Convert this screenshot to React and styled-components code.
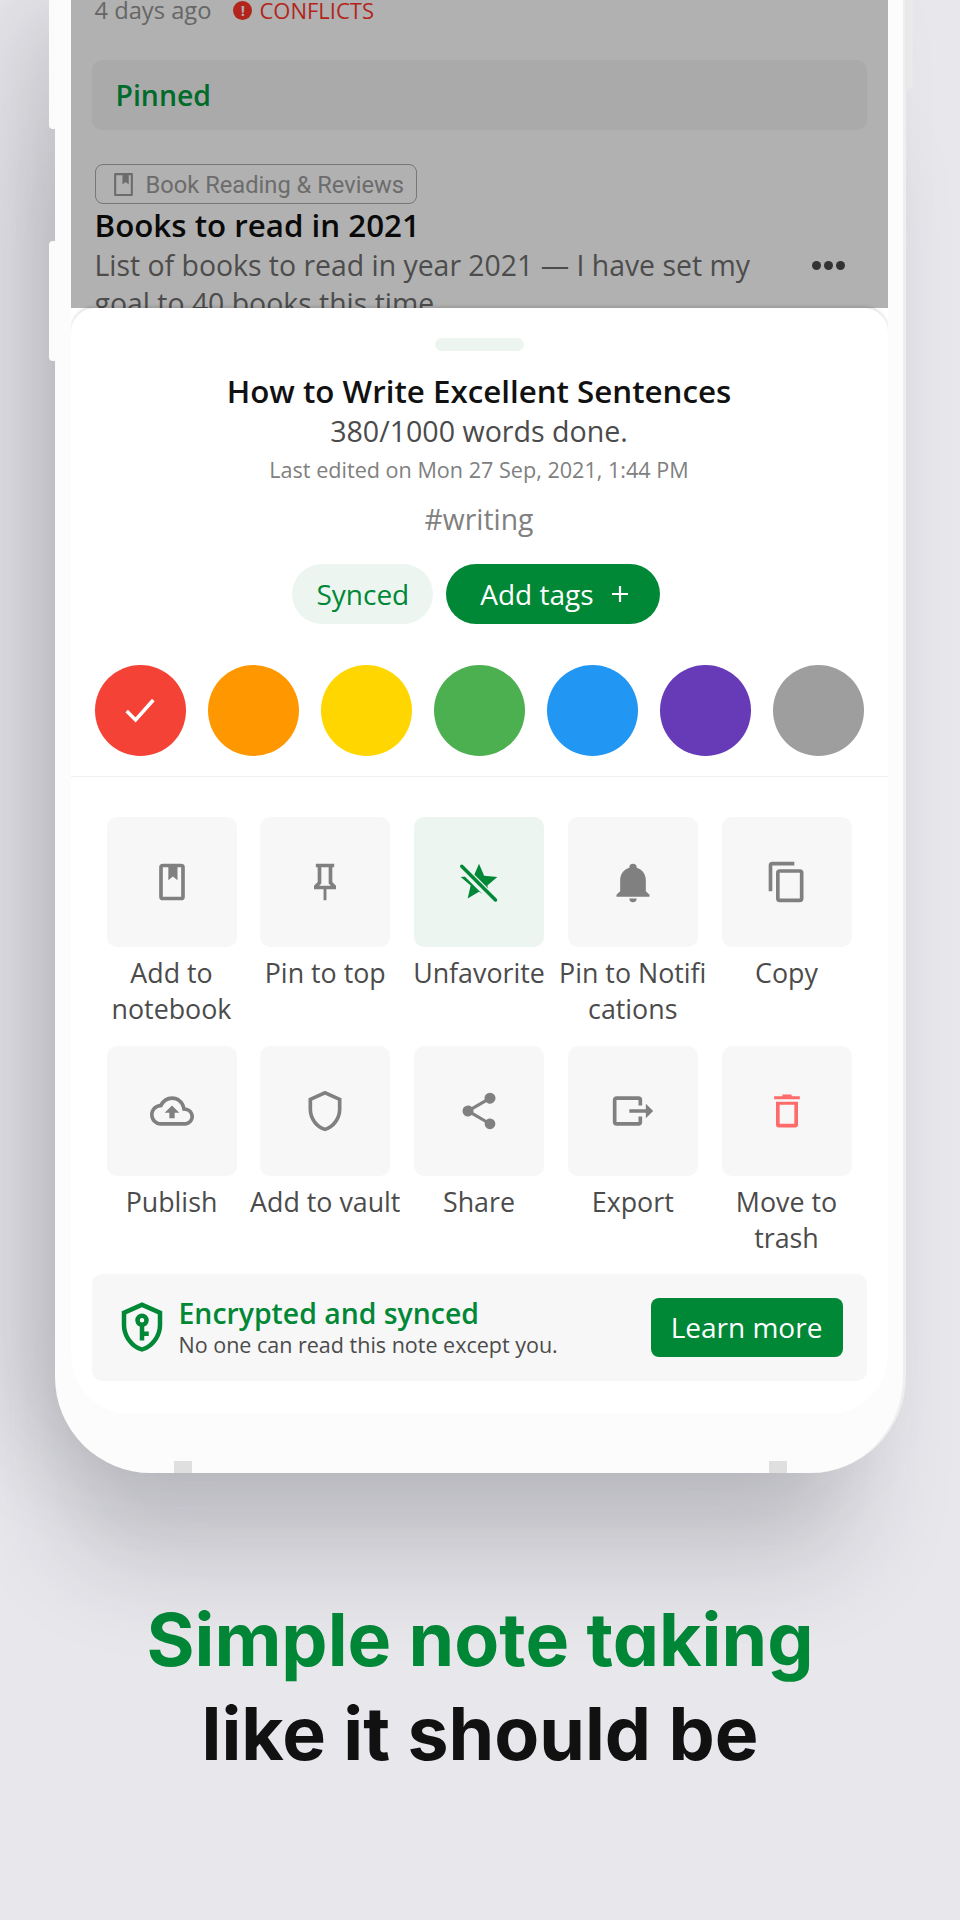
import React from 'react'
import styled, { createGlobalStyle } from 'styled-components'

const GlobalStyle = createGlobalStyle`
  html, body {
    margin: 0;
    padding: 0;
    background: #e7e7ec;
  }
  * {
    box-sizing: border-box;
  }
`

const colors = ['#f44336', '#ff9800', '#ffd600', '#4caf50', '#2196f3', '#673ab7', '#9e9e9e']

const icons = {
  notebook: (
    <>
      <path d="M7 2h10a2 2 0 0 1 2 2v16a2 2 0 0 1-2 2H7a2 2 0 0 1-2-2V4a2 2 0 0 1 2-2zm0 2v16h10V4h-2v7l-2.5-2-2.5 2V4H7z" />
    </>
  ),
  pin: <path d="M16,12V4H17V2H7V4H8V12L6,14V16H11.2V22H12.8V16H18V14L16,12M8.8,14L10,12.8V4H14V12.8L15.2,14H8.8Z" />,
  star: (
    <>
      <path d="M12,17.27L18.18,21L16.54,13.97L22,9.24L14.81,8.62L12,2L9.19,8.62L2,9.24L7.45,13.97L5.82,21L12,17.27Z" />
      <path d="M2 3.6L20 21.6" stroke="#edf5f0" strokeWidth="4.4" fill="none" />
      <path d="M2.6 3.4L21 21.8" stroke="currentColor" strokeWidth="1.9" fill="none" strokeLinecap="round" />
    </>
  ),
  bell: <path d="M21,19V20H3V19L5,17V11C5,7.9 7.03,5.17 10,4.29C10,4.19 10,4.1 10,4A2,2 0 0,1 12,2A2,2 0 0,1 14,4C14,4.1 14,4.19 14,4.29C16.97,5.17 19,7.9 19,11V17L21,19M14,21A2,2 0 0,1 12,23A2,2 0 0,1 10,21" />,
  copy: <path d="M19,21H8V7H19M19,5H8A2,2 0 0,0 6,7V21A2,2 0 0,0 8,23H19A2,2 0 0,0 21,21V7A2,2 0 0,0 19,5M16,1H4A2,2 0 0,0 2,3V17H4V3H16V1Z" />,
  cloud: <path d="M19.35 10.04C18.67 6.59 15.64 4 12 4 9.11 4 6.6 5.64 5.35 8.04 2.34 8.36 0 10.91 0 14c0 3.31 2.69 6 6 6h13c2.76 0 5-2.24 5-5 0-2.64-2.05-4.78-4.65-4.96zM19 18H6c-2.21 0-4-1.79-4-4 0-2.05 1.53-3.76 3.56-3.97l1.07-.11.5-.95C8.08 7.14 9.94 6 12 6c2.62 0 4.88 1.86 5.39 4.43l.3 1.5 1.53.11c1.56.1 2.78 1.41 2.78 2.96 0 1.65-1.35 3-3 3zM8 13h2.55v3h2.9v-3H16l-4-4z" />,
  shield: <path d="M21,11C21,16.55 17.16,21.74 12,23C6.84,21.74 3,16.55 3,11V5L12,1L21,5V11M12,21C15.75,20 19,15.54 19,11.22V6.3L12,3.18L5,6.3V11.22C5,15.54 8.25,20 12,21Z" />,
  share: <path d="M18,16.08C17.24,16.08 16.56,16.38 16.04,16.85L8.91,12.7C8.96,12.47 9,12.24 9,12C9,11.76 8.96,11.53 8.91,11.3L15.96,7.19C16.5,7.69 17.21,8 18,8A3,3 0 0,0 21,5A3,3 0 0,0 18,2A3,3 0 0,0 15,5C15,5.24 15.04,5.47 15.09,5.7L8.04,9.81C7.5,9.31 6.79,9 6,9A3,3 0 0,0 3,12A3,3 0 0,0 6,15C6.79,15 7.5,14.69 8.04,14.19L15.16,18.34C15.11,18.55 15.08,18.77 15.08,19C15.08,20.61 16.39,21.92 18,21.92C19.61,21.92 20.92,20.61 20.92,19A2.92,2.92 0 0,0 18,16.08Z" />,
  export: <path d="M23,12L19,8V11H10V13H19V16M1,18V6C1,4.89 1.9,4 3,4H15A2,2 0 0,1 17,6V9H15V6H3V18H15V15H17V18A2,2 0 0,1 15,20H3A2,2 0 0,1 1,18Z" />,
  trash: <path d="M9.5,3V4H5V5.6H19V4H14.5V3H9.5M6,7V19.5A1.5,1.5 0 0,0 7.5,21H16.5A1.5,1.5 0 0,0 18,19.5V7H6M8,8.6H16V19H8V8.6Z" />,
}

const actions = [
  { icon: 'notebook', label: 'Add to notebook' },
  { icon: 'pin', label: 'Pin to top' },
  { icon: 'star', label: 'Unfavorite', active: true },
  { icon: 'bell', label: <>Pin to Notifi<br />cations</> },
  { icon: 'copy', label: 'Copy' },
  { icon: 'cloud', label: 'Publish' },
  { icon: 'shield', label: 'Add to vault' },
  { icon: 'share', label: 'Share' },
  { icon: 'export', label: 'Export' },
  { icon: 'trash', label: 'Move to trash', danger: true },
]

const App = () => {
  return (
    <Page>
      <GlobalStyle />
      <Phone>
        <SideButton $top={-10} $height={139} />
        <SideButton $top={241} $height={120} />
        <RightButton />
        <Notch $left={119} />
        <Notch $left={714} />
        <Screen>
          <Backdrop>
            <MetaRow>
              <span>4 days ago</span>
              <Conflicts>
                <AlertDot>!</AlertDot>
                CONFLICTS
              </Conflicts>
            </MetaRow>
            <PinnedBar>Pinned</PinnedBar>
            <NotebookChip>
              <ChipIcon viewBox="0 0 20 24" fill="currentColor">
                <path d="M2 1h16a1 1 0 0 1 1 1v20a1 1 0 0 1-1 1H2a1 1 0 0 1-1-1V2a1 1 0 0 1 1-1zm1 2v18h14V3h-2v9l-3-2.4L9 12V3H3z" />
              </ChipIcon>
              Book Reading &amp; Reviews
            </NotebookChip>
            <NoteTitle>Books to read in 2021</NoteTitle>
            <NoteRow>
              <NoteBody>
                List of books to read in year 2021 — I have set my goal to 40 books this time.
              </NoteBody>
              <Dots>
                <i />
                <i />
                <i />
              </Dots>
            </NoteRow>
          </Backdrop>
          <Sheet>
            <Handle />
            <SheetTitle>How to Write Excellent Sentences</SheetTitle>
            <WordCount>380/1000 words done.</WordCount>
            <Edited>Last edited on Mon 27 Sep, 2021, 1:44 PM</Edited>
            <Hashtag>#writing</Hashtag>
            <PillRow>
              <SyncedPill>Synced</SyncedPill>
              <AddTagsPill>
                Add tags
                <PlusIcon viewBox="0 0 20 20" stroke="currentColor" strokeWidth="2.2">
                  <path d="M10 2v16M2 10h16" />
                </PlusIcon>
              </AddTagsPill>
            </PillRow>
            <ColorRow>
              {colors.map((color, i) => (
                <Swatch key={color} $color={color}>
                  {i === 0 && (
                    <svg width="40" height="40" viewBox="0 0 36 36" fill="none" stroke="#fff" strokeWidth="3.2">
                      <path d="M6 19l8 8L30 9" />
                    </svg>
                  )}
                </Swatch>
              ))}
            </ColorRow>
            <ActionGrid>
              {actions.map((action) => (
                <Action key={action.icon}>
                  <Tile $active={action.active} $danger={action.danger}>
                    <svg width="44" height="44" viewBox="0 0 24 24" fill="currentColor">
                      {icons[action.icon]}
                    </svg>
                  </Tile>
                  <ActionLabel>{action.label}</ActionLabel>
                </Action>
              ))}
            </ActionGrid>
            <Banner>
              <svg width="54" height="54" viewBox="0 0 24 24" fill="#008837">
                <path d="M12,1L3,5V11C3,16.55 6.84,21.74 12,23C17.16,21.74 21,16.55 21,11V5L12,1M12,3.18L19,6.3V11.22C19,15.54 15.75,20 12,21C8.25,20 5,15.54 5,11.22V6.3L12,3.18M12,6A3,3 0 0,0 9,9C9,10.31 9.83,11.42 11,11.83V18H13V16H15V14H13V11.83C14.17,11.42 15,10.31 15,9A3,3 0 0,0 12,6M12,8A1,1 0 0,1 13,9A1,1 0 0,1 12,10A1,1 0 0,1 11,9A1,1 0 0,1 12,8Z" />
              </svg>
              <BannerText>
                <BannerTitle>Encrypted and synced</BannerTitle>
                <BannerSub>No one can read this note except you.</BannerSub>
              </BannerText>
              <LearnMore>Learn more</LearnMore>
            </Banner>
          </Sheet>
        </Screen>
      </Phone>
      <Headline>
        <HeadlineLine $green>Simple note taking</HeadlineLine>
        <HeadlineLine>like it should be</HeadlineLine>
      </Headline>
    </Page>
  )
}

const Page = styled.div`
  width: 960px;
  height: 1920px;
  overflow: hidden;
  background: #e7e7ec;
  display: flex;
  flex-direction: column;
  align-items: center;
  font-family: 'Open Sans', sans-serif;
`

const Phone = styled.div`
  position: relative;
  flex: none;
  width: 851px;
  height: 1473px;
  padding: 0 15px 59px 16px;
  background: #fcfcfc;
  border-radius: 0 0 96px 96px;
  border-right: 3px solid #eeeeee;
  display: flex;
  box-shadow: -50px 0 90px -10px rgba(40, 40, 50, 0.17),
    -20px 120px 100px -30px rgba(40, 40, 50, 0.18);
`

const SideButton = styled.div`
  position: absolute;
  left: -6px;
  top: ${(p) => p.$top}px;
  width: 6px;
  height: ${(p) => p.$height}px;
  background: #fbfbfb;
  border-radius: 4px 0 0 4px;
`

const RightButton = styled.div`
  position: absolute;
  right: -10px;
  top: -10px;
  width: 8px;
  height: 99px;
  background: #e9e9ea;
  border-radius: 0 4px 4px 0;
`

const Notch = styled.div`
  position: absolute;
  left: ${(p) => p.$left}px;
  bottom: 0;
  width: 18px;
  height: 12px;
  background: #dfdfdf;
`

const Screen = styled.div`
  flex: 1;
  min-width: 0;
  display: flex;
  flex-direction: column;
  background: #fff;
  border-radius: 0 0 60px 60px;
  overflow: hidden;
`

const Backdrop = styled.div`
  flex: none;
  height: 308px;
  padding: 0 21px;
  overflow: hidden;
  background: #b1b1b1;
`

const MetaRow = styled.div`
  display: flex;
  align-items: center;
  gap: 22px;
  height: 30px;
  margin: -5px 0 0 3px;
  font-size: 23.7px;
  line-height: 30px;
  color: #666;
`

const Conflicts = styled.span`
  display: flex;
  align-items: center;
  gap: 7px;
  font-size: 22px;
  color: #b3251c;
`

const AlertDot = styled.span`
  width: 19px;
  height: 19px;
  border-radius: 50%;
  background: #b3251c;
  color: #b1b1b1;
  font-size: 15px;
  font-weight: 700;
  line-height: 19px;
  text-align: center;
`

const PinnedBar = styled.div`
  height: 70px;
  margin-top: 35px;
  padding-left: 24px;
  border-radius: 10px;
  background: #aaaaaa;
  color: #006b2a;
  font-size: 28.4px;
  font-weight: 600;
  line-height: 70px;
`

const NotebookChip = styled.div`
  display: inline-flex;
  align-items: center;
  gap: 12px;
  height: 40px;
  margin: 34px 0 0 3px;
  padding: 1px 12px 0 17px;
  border: 1.5px solid #777;
  border-radius: 8px;
  font-family: Roboto, sans-serif;
  font-size: 23.7px;
  color: #6c6c6c;
`

const ChipIcon = styled.svg`
  width: 21px;
  height: 25px;
`

const NoteTitle = styled.div`
  margin: 1px 0 0 3px;
  font-size: 31.3px;
  font-weight: 600;
  line-height: 41px;
  color: #0a0a0a;
`

const NoteRow = styled.div`
  display: flex;
  margin-left: 3px;
`

const NoteBody = styled.div`
  width: 694px;
  font-size: 28.4px;
  line-height: 38px;
  color: #4c4c4c;
`

const Dots = styled.div`
  display: flex;
  gap: 3px;
  height: 8px;
  margin: 15px 0 0 23px;
  i {
    width: 9px;
    height: 9px;
    border-radius: 50%;
    background: #333;
  }
`

const Sheet = styled.div`
  flex: 1;
  display: flex;
  flex-direction: column;
  align-items: center;
  padding: 30px 21px 0;
  border-radius: 24px 24px 0 0;
  background: #fff;
  box-shadow: 0 -2px 3px rgba(0, 0, 0, 0.12);
  position: relative;
`

const Handle = styled.div`
  width: 89px;
  height: 13px;
  border-radius: 7px;
  background: #edf5f0;
`

const SheetTitle = styled.div`
  margin-top: 19px;
  font-size: 31.3px;
  font-weight: 600;
  line-height: 42px;
  color: #111;
`

const WordCount = styled.div`
  font-size: 28.6px;
  line-height: 38px;
  color: #4b4b4b;
`

const Edited = styled.div`
  margin-top: 2px;
  font-size: 21.6px;
  line-height: 36px;
  color: #808080;
`

const Hashtag = styled.div`
  margin-top: 11.5px;
  font-size: 28.3px;
  line-height: 38px;
  color: #808080;
`

const PillRow = styled.div`
  display: flex;
  gap: 13px;
  margin: 26px 6px 0 0;
`

const SyncedPill = styled.div`
  display: flex;
  align-items: center;
  height: 60px;
  padding: 0 24px;
  border-radius: 30px;
  background: #edf5f0;
  color: #008837;
  font-size: 28px;
`

const AddTagsPill = styled(SyncedPill)`
  gap: 16px;
  padding: 0 30px 0 34px;
  background: #008837;
  color: #fff;
`

const PlusIcon = styled.svg`
  width: 20px;
  height: 20px;
`

const ColorRow = styled.div`
  align-self: stretch;
  display: flex;
  justify-content: space-between;
  margin: 41px -21px 0;
  padding: 0 24px 20px;
  border-bottom: 1px solid #f2f2f2;
`

const Swatch = styled.div`
  display: flex;
  align-items: center;
  justify-content: center;
  width: 91px;
  height: 91px;
  border-radius: 50%;
  background: ${(p) => p.$color};
`

const ActionGrid = styled.div`
  align-self: stretch;
  display: grid;
  grid-template-columns: repeat(5, 130px);
  grid-auto-rows: 229px;
  justify-content: space-between;
  margin-top: 40px;
  padding: 0 15px;
`

const Action = styled.div`
  display: flex;
  flex-direction: column;
  align-items: center;
`

const Tile = styled.div`
  display: flex;
  align-items: center;
  justify-content: center;
  width: 130px;
  height: 130px;
  flex: none;
  border-radius: 10px;
  background: ${(p) => (p.$active ? '#edf5f0' : '#f7f7f7')};
  color: ${(p) => (p.$active ? '#008837' : p.$danger ? '#ff6b6b' : '#808080')};
`

const ActionLabel = styled.div`
  width: 160px;
  margin-top: 8px;
  text-align: center;
  font-size: 26.8px;
  line-height: 36.5px;
  color: #4b4b4b;
`

const Banner = styled.div`
  align-self: stretch;
  display: flex;
  align-items: center;
  height: 107px;
  margin-top: -1px;
  padding: 0 24px 0 23px;
  border-radius: 10px;
  background: #f7f7f7;
`

const BannerText = styled.div`
  flex: 1;
  margin-left: 10px;
`

const BannerTitle = styled.div`
  font-size: 28.4px;
  font-weight: 600;
  line-height: 36px;
  color: #008837;
`

const BannerSub = styled.div`
  font-size: 21.5px;
  line-height: 28px;
  color: #4b4b4b;
`

const LearnMore = styled.div`
  display: flex;
  align-items: center;
  justify-content: center;
  width: 192px;
  height: 59px;
  border-radius: 8px;
  background: #008837;
  color: #fff;
  font-size: 28px;
`

const Headline = styled.div`
  margin-top: 120px;
  text-align: center;
  font-family: Inter, sans-serif;
  font-weight: 700;
  font-size: 73.4px;
  line-height: 94px;
  font-feature-settings: 'cv11';
`

const HeadlineLine = styled.div`
  color: ${(p) => (p.$green ? '#008837' : '#111')};
`

export default App
